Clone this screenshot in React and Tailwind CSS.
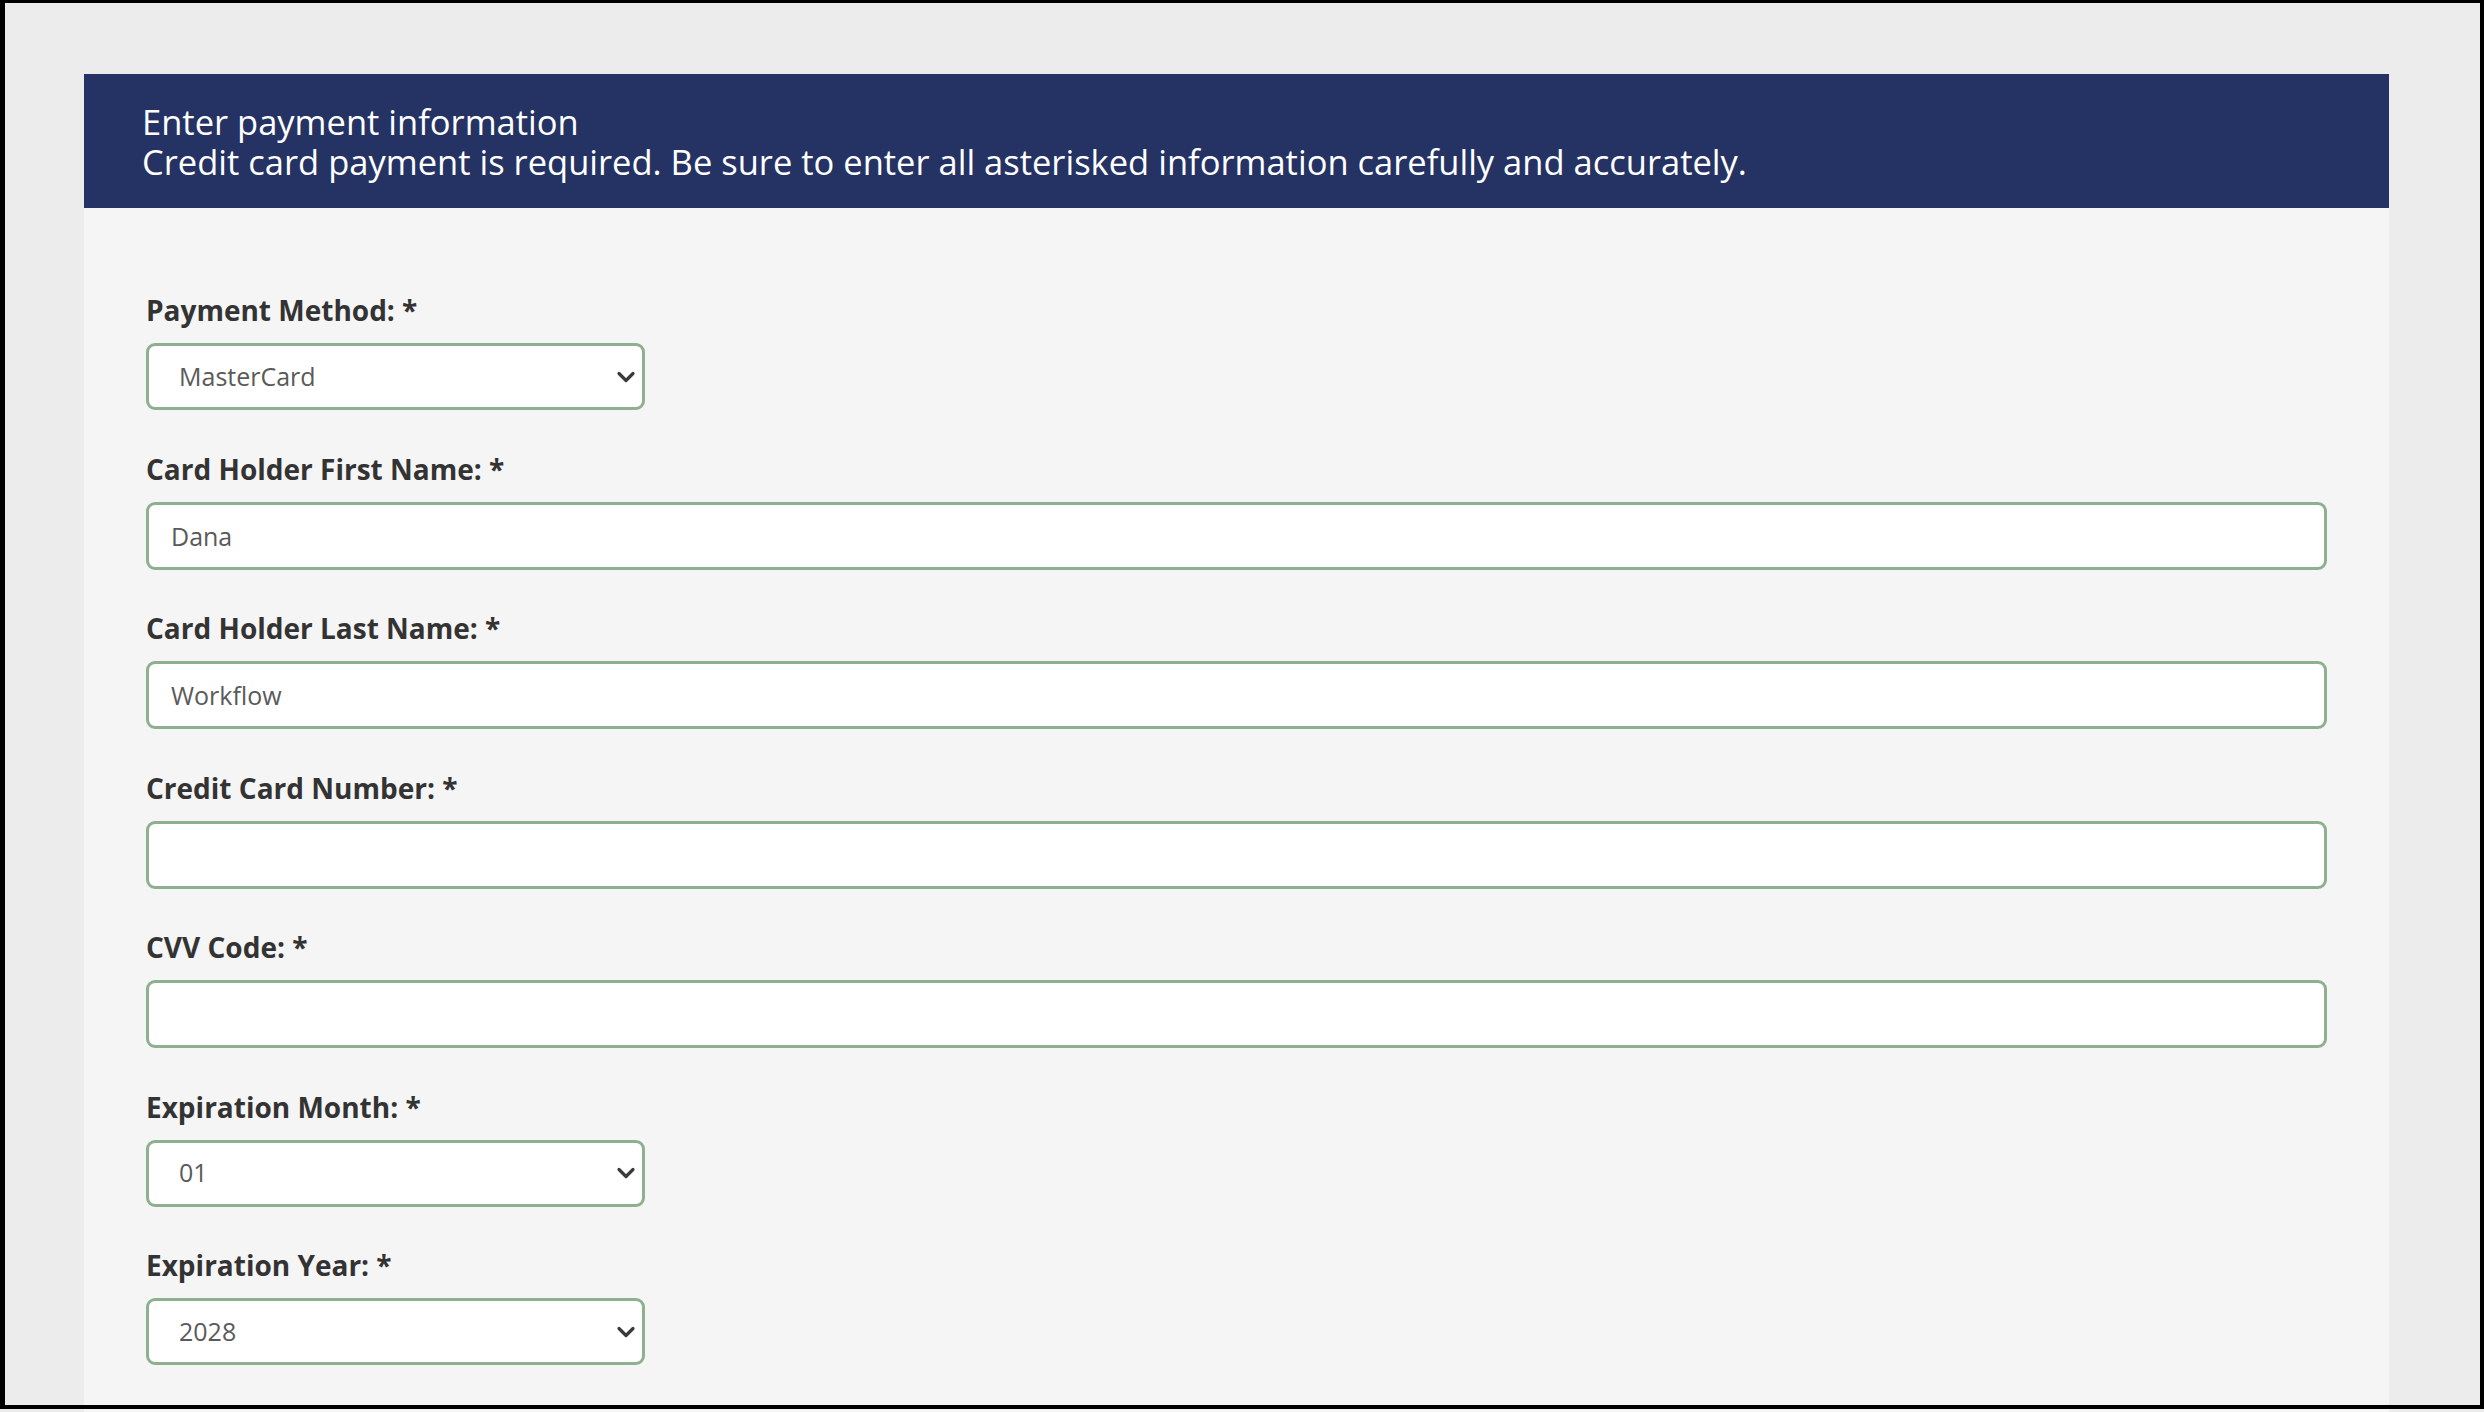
import React from "react";

const fields = [
  { label: "Payment Method: *", type: "select", value: "MasterCard", options: ["Visa", "MasterCard", "American Express", "Discover"] },
  { label: "Card Holder First Name: *", type: "text", value: "Dana" },
  { label: "Card Holder Last Name: *", type: "text", value: "Workflow" },
  { label: "Credit Card Number: *", type: "text", value: "" },
  { label: "CVV Code: *", type: "text", value: "" },
  {
    label: "Expiration Month: *",
    type: "select",
    value: "01",
    options: ["01", "02", "03", "04", "05", "06", "07", "08", "09", "10", "11", "12"],
  },
  { label: "Expiration Year: *", type: "select", value: "2028", options: ["2025", "2026", "2027", "2028", "2029", "2030"] },
];

function Chevron() {
  return (
    <svg className="pointer-events-none absolute right-[9px] top-1/2 -translate-y-1/2" width="20" height="12" viewBox="0 0 20 12" fill="none">
      <path d="M3 2.5l7 7 7-7" stroke="#3a3a3a" strokeWidth="3.2" strokeLinecap="round" strokeLinejoin="round" />
    </svg>
  );
}

function Field({ field }) {
  return (
    <div className="mb-[38.5px]">
      <label className="block h-[40px] leading-[40px] text-[28px] font-bold text-[#333] mb-[13px]">{field.label}</label>
      {field.type === "select" ? (
        <div className="relative w-[499px]">
          <select
            defaultValue={field.value}
            className="w-full h-[67px] appearance-none rounded-[9px] border-[3px] border-[#8fb08f] bg-white pl-[30px] pr-10 text-[25px] text-[#5a5a5a] outline-none"
          >
            {field.options.map((o) => (
              <option key={o}>{o}</option>
            ))}
          </select>
          <Chevron />
        </div>
      ) : (
        <input
          type="text"
          defaultValue={field.value}
          className="block w-full h-[68px] rounded-[9px] border-[3px] border-[#8fb08f] bg-white px-[22px] text-[25px] text-[#5a5a5a] outline-none"
        />
      )}
    </div>
  );
}

export default function App() {
  return (
    <div className="relative h-[1412px] overflow-hidden bg-[#ececec] font-['Open_Sans',sans-serif]">
      <div className="pt-[74px] pl-[84px] pr-[95px]">
        <div className="bg-[#f5f5f5] min-h-[1400px]">
          <div className="bg-[#243364] pl-[58px] pt-[28px] pb-[26px] text-white text-[34.5px] leading-[40px]">
            <p>Enter payment information</p>
            <p>Credit card payment is required. Be sure to enter all asterisked information carefully and accurately.</p>
          </div>
          <form className="px-[62px] pt-[82px]">
            {fields.map((f) => (
              <Field key={f.label} field={f} />
            ))}
          </form>
        </div>
      </div>
      {/* dark frame around the view */}
      <div className="pointer-events-none absolute left-0 top-0 w-full h-[1409px] border-black border-t-[3px] border-l-[5px] border-r-[4px] border-b-[4px]" />
    </div>
  );
}
